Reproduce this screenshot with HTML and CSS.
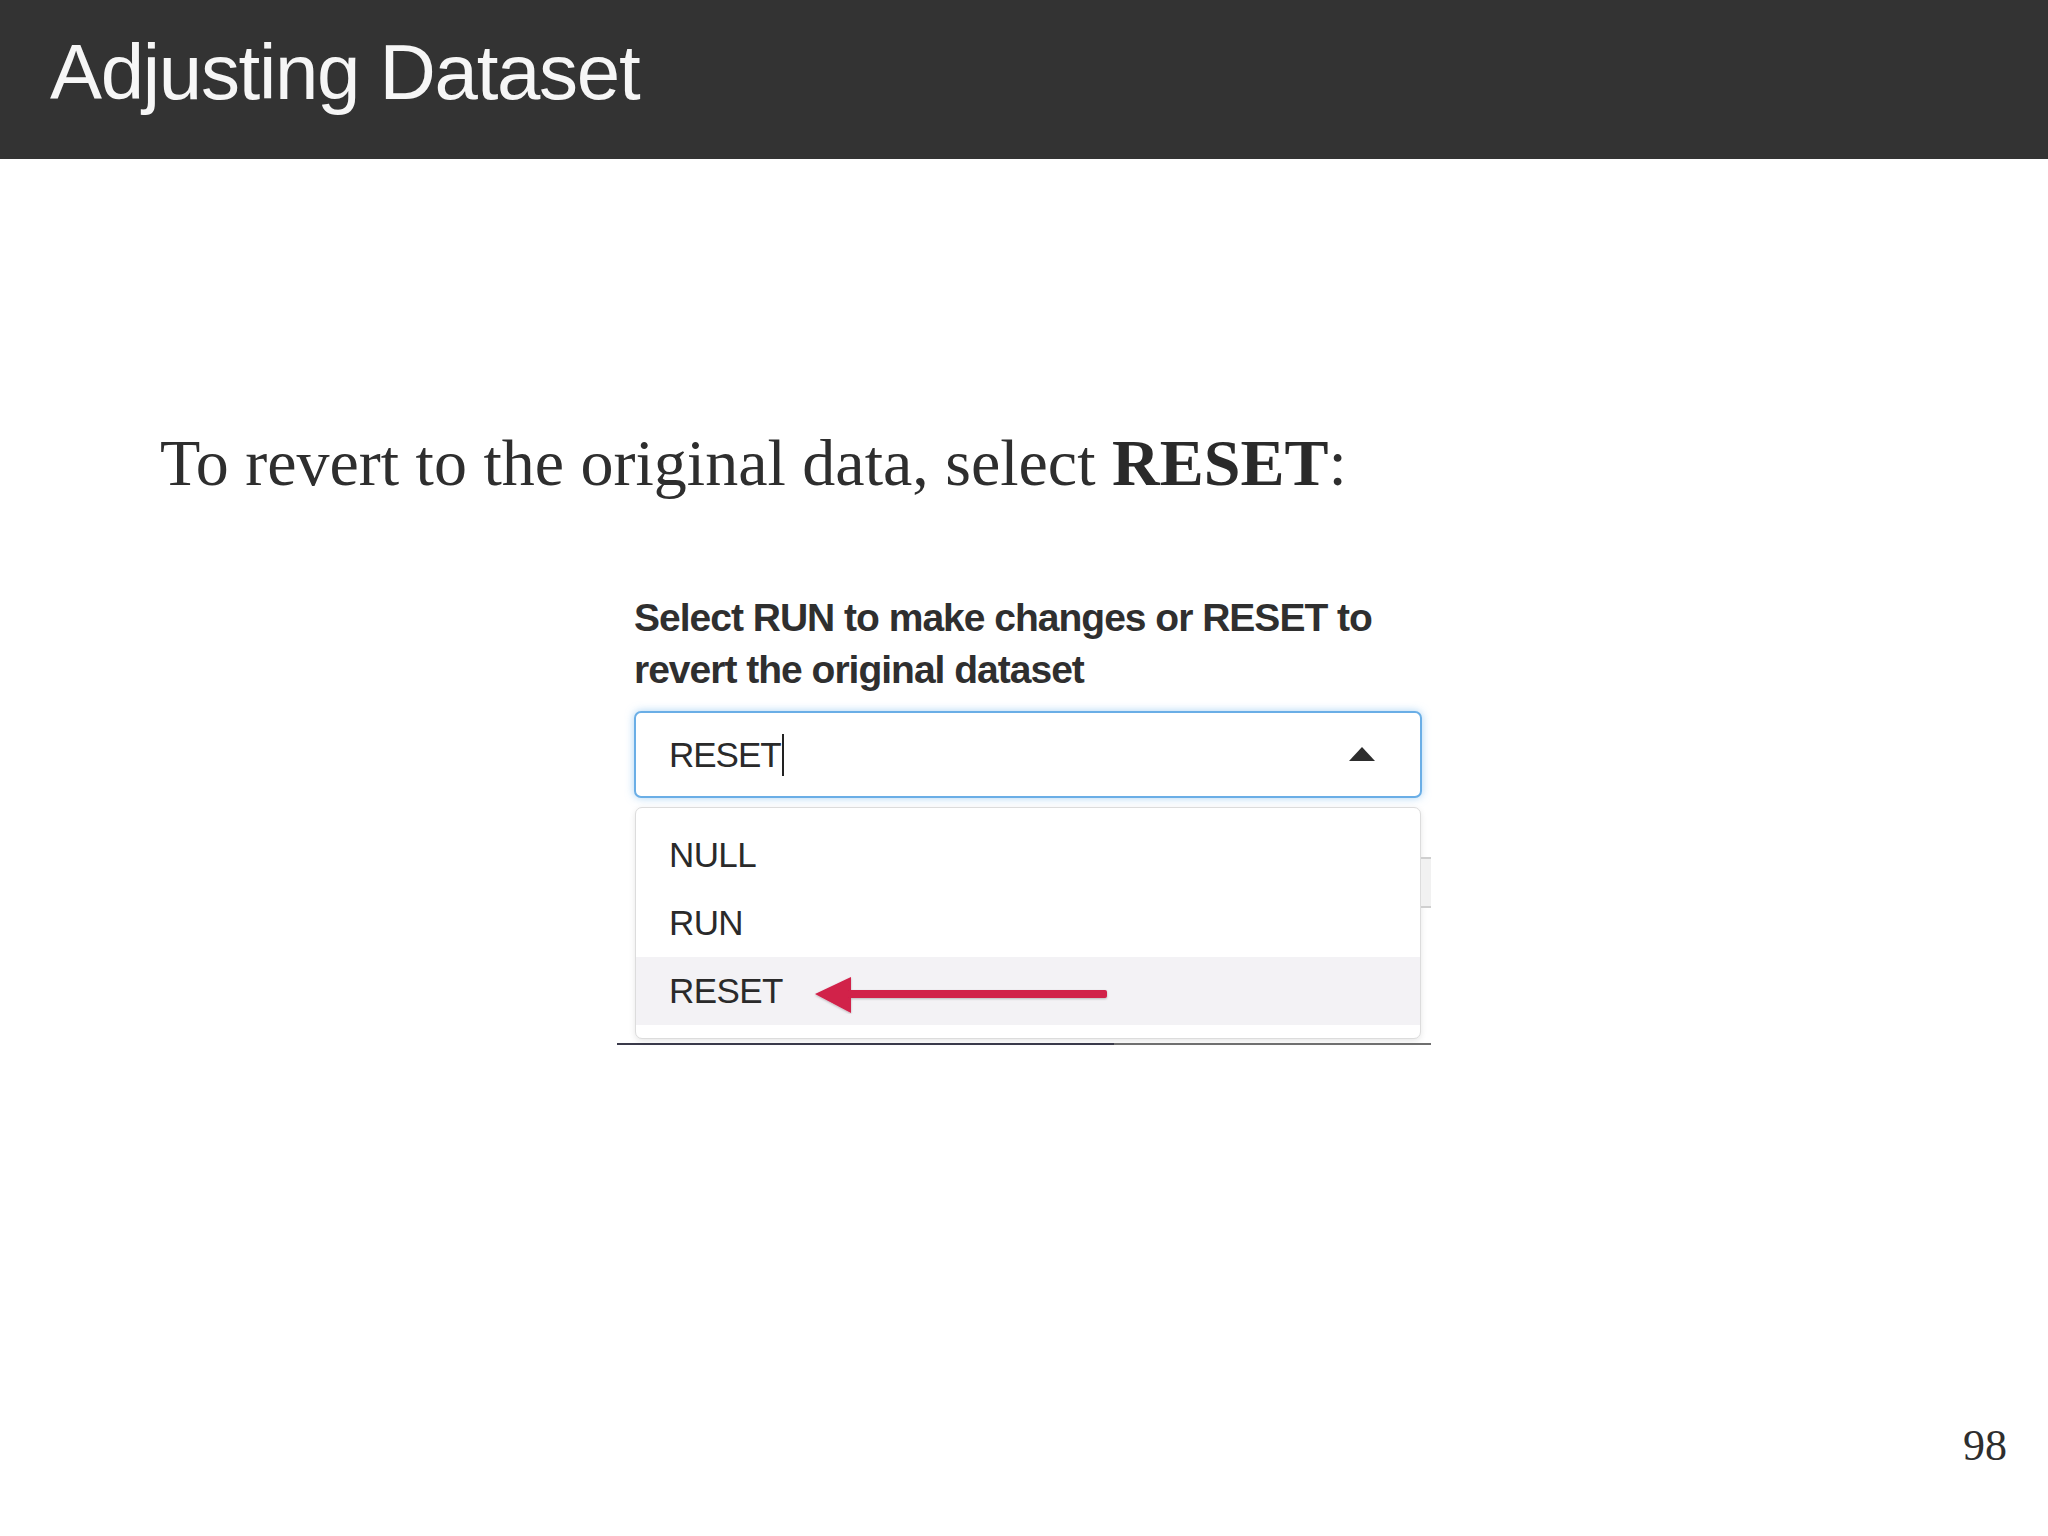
FILE: index.html
```html
<!DOCTYPE html>
<html lang="en">
<head>
<meta charset="utf-8">
<title>Adjusting Dataset</title>
<link rel="stylesheet" href="styles.css">
</head>
<body>
  <header class="slide-header">
    <h1 class="slide-title">Adjusting Dataset</h1>
  </header>
  <main class="slide-body">
    <p class="lead">To revert to the original data, select <strong>RESET</strong>:</p>
    <div class="shot">
      <div class="shot-label">Select RUN to make changes or RESET to<br>revert the original dataset</div>
      <div class="select-box">
        <span class="select-value">RESET</span><span class="text-cursor"></span>
        <svg class="select-caret" width="26" height="14" viewBox="0 0 26 14"><polygon points="13,0 26,14 0,14" fill="#2d2d2d"/></svg>
      </div>
      <div class="dropdown">
        <div class="option">NULL</div>
        <div class="option">RUN</div>
        <div class="option option-active">RESET
          <svg class="arrow" width="296" height="38" viewBox="0 0 296 38">
            <defs>
              <filter id="soft" x="-5%" y="-30%" width="110%" height="160%">
                <feDropShadow dx="0" dy="1" stdDeviation="1.2" flood-color="#000" flood-opacity="0.25"/>
              </filter>
            </defs>
            <g filter="url(#soft)" fill="#d1204a">
              <polygon points="1,18 37,1 37,37"/>
              <rect x="34" y="14" width="259" height="8" rx="2"/>
            </g>
          </svg>
        </div>
      </div>
      <div class="side-strip"></div>
      <div class="shot-rule"></div>
    </div>
  </main>
  <footer class="slide-footer">
    <span class="page-num">98</span>
  </footer>
</body>
</html>
```

FILE: styles.css
```css
html, body {
  margin: 0;
  padding: 0;
}

body {
  width: 2048px;
  height: 1536px;
  background: #ffffff;
  display: flex;
  flex-direction: column;
  overflow: hidden;
}

.slide-header {
  height: 159px;
  background: #333333;
  box-sizing: border-box;
  padding: 33px 0 0 50px;
  flex: none;
}

.slide-title {
  margin: 0;
  font-family: "Liberation Sans", Arial, sans-serif;
  font-weight: normal;
  font-size: 78px;
  line-height: 78px;
  letter-spacing: -1.3px;
  color: #f6f6f6;
}

.slide-body {
  padding-top: 271px;
  flex: none;
}

.lead {
  margin: 0 0 0 160px;
  font-family: "Liberation Serif", "Times New Roman", serif;
  font-size: 66px;
  line-height: 66px;
  color: #2e2e2e;
  letter-spacing: 0;
}

.lead strong {
  font-weight: bold;
  color: #2a2a2a;
}

.shot {
  position: relative;
  margin: 96px 0 0 617px;
  width: 814px;
  box-sizing: border-box;
  padding: 0 9px 0 17px;
  font-family: "Liberation Sans", Arial, sans-serif;
  color: #2f2f2f;
}

.shot-label {
  font-weight: bold;
  font-size: 39px;
  line-height: 52px;
  letter-spacing: -1px;
  color: #2f2f2f;
}

.select-box {
  margin-top: 15px;
  height: 87px;
  box-sizing: border-box;
  border: 2px solid #6aaee6;
  border-radius: 7px;
  box-shadow: 0 0 9px rgba(102, 175, 233, 0.55);
  display: flex;
  align-items: center;
  padding: 0 45px 0 33px;
  background: #ffffff;
}

.select-value {
  font-size: 35px;
  line-height: 35px;
  letter-spacing: -1px;
  color: #2a2a2a;
}

.text-cursor {
  width: 2px;
  height: 42px;
  background: #222;
  margin-left: 1px;
}

.select-caret {
  margin-left: auto;
  margin-top: -2px;
}

.dropdown {
  margin-top: 9px;
  margin-left: 1px;
  margin-right: 1px;
  border: 1px solid #dcdcdc;
  border-radius: 7px;
  box-shadow: 0 2px 6px rgba(0, 0, 0, 0.10);
  padding: 13px 0 13px;
  background: #ffffff;
}

.option {
  position: relative;
  height: 68px;
  line-height: 68px;
  padding-left: 33px;
  font-size: 35px;
  letter-spacing: -0.6px;
  color: #2a2a2a;
}

.option-active {
  background: #f3f2f5;
}

.arrow {
  position: absolute;
  left: 178px;
  top: 19px;
}

.side-strip {
  position: absolute;
  right: 0;
  top: 265px;
  width: 10px;
  height: 51px;
  box-sizing: border-box;
  border-top: 2px solid #cfcfcf;
  border-bottom: 2px solid #cfcfcf;
  background: #f1f1f1;
}

.shot-rule {
  margin: 4px -9px 0 -17px;
  height: 2px;
  background: linear-gradient(to right, #3a3a4a 0, #3a3a4a 61%, #6f6f6f 61%, #6f6f6f 100%);
}

.slide-footer {
  margin-top: auto;
  padding: 0 41px 68px 0;
  text-align: right;
  flex: none;
}

.page-num {
  font-family: "Liberation Serif", "Times New Roman", serif;
  font-size: 44px;
  line-height: 44px;
  color: #2e2e2e;
  display: inline-block;
}
```
